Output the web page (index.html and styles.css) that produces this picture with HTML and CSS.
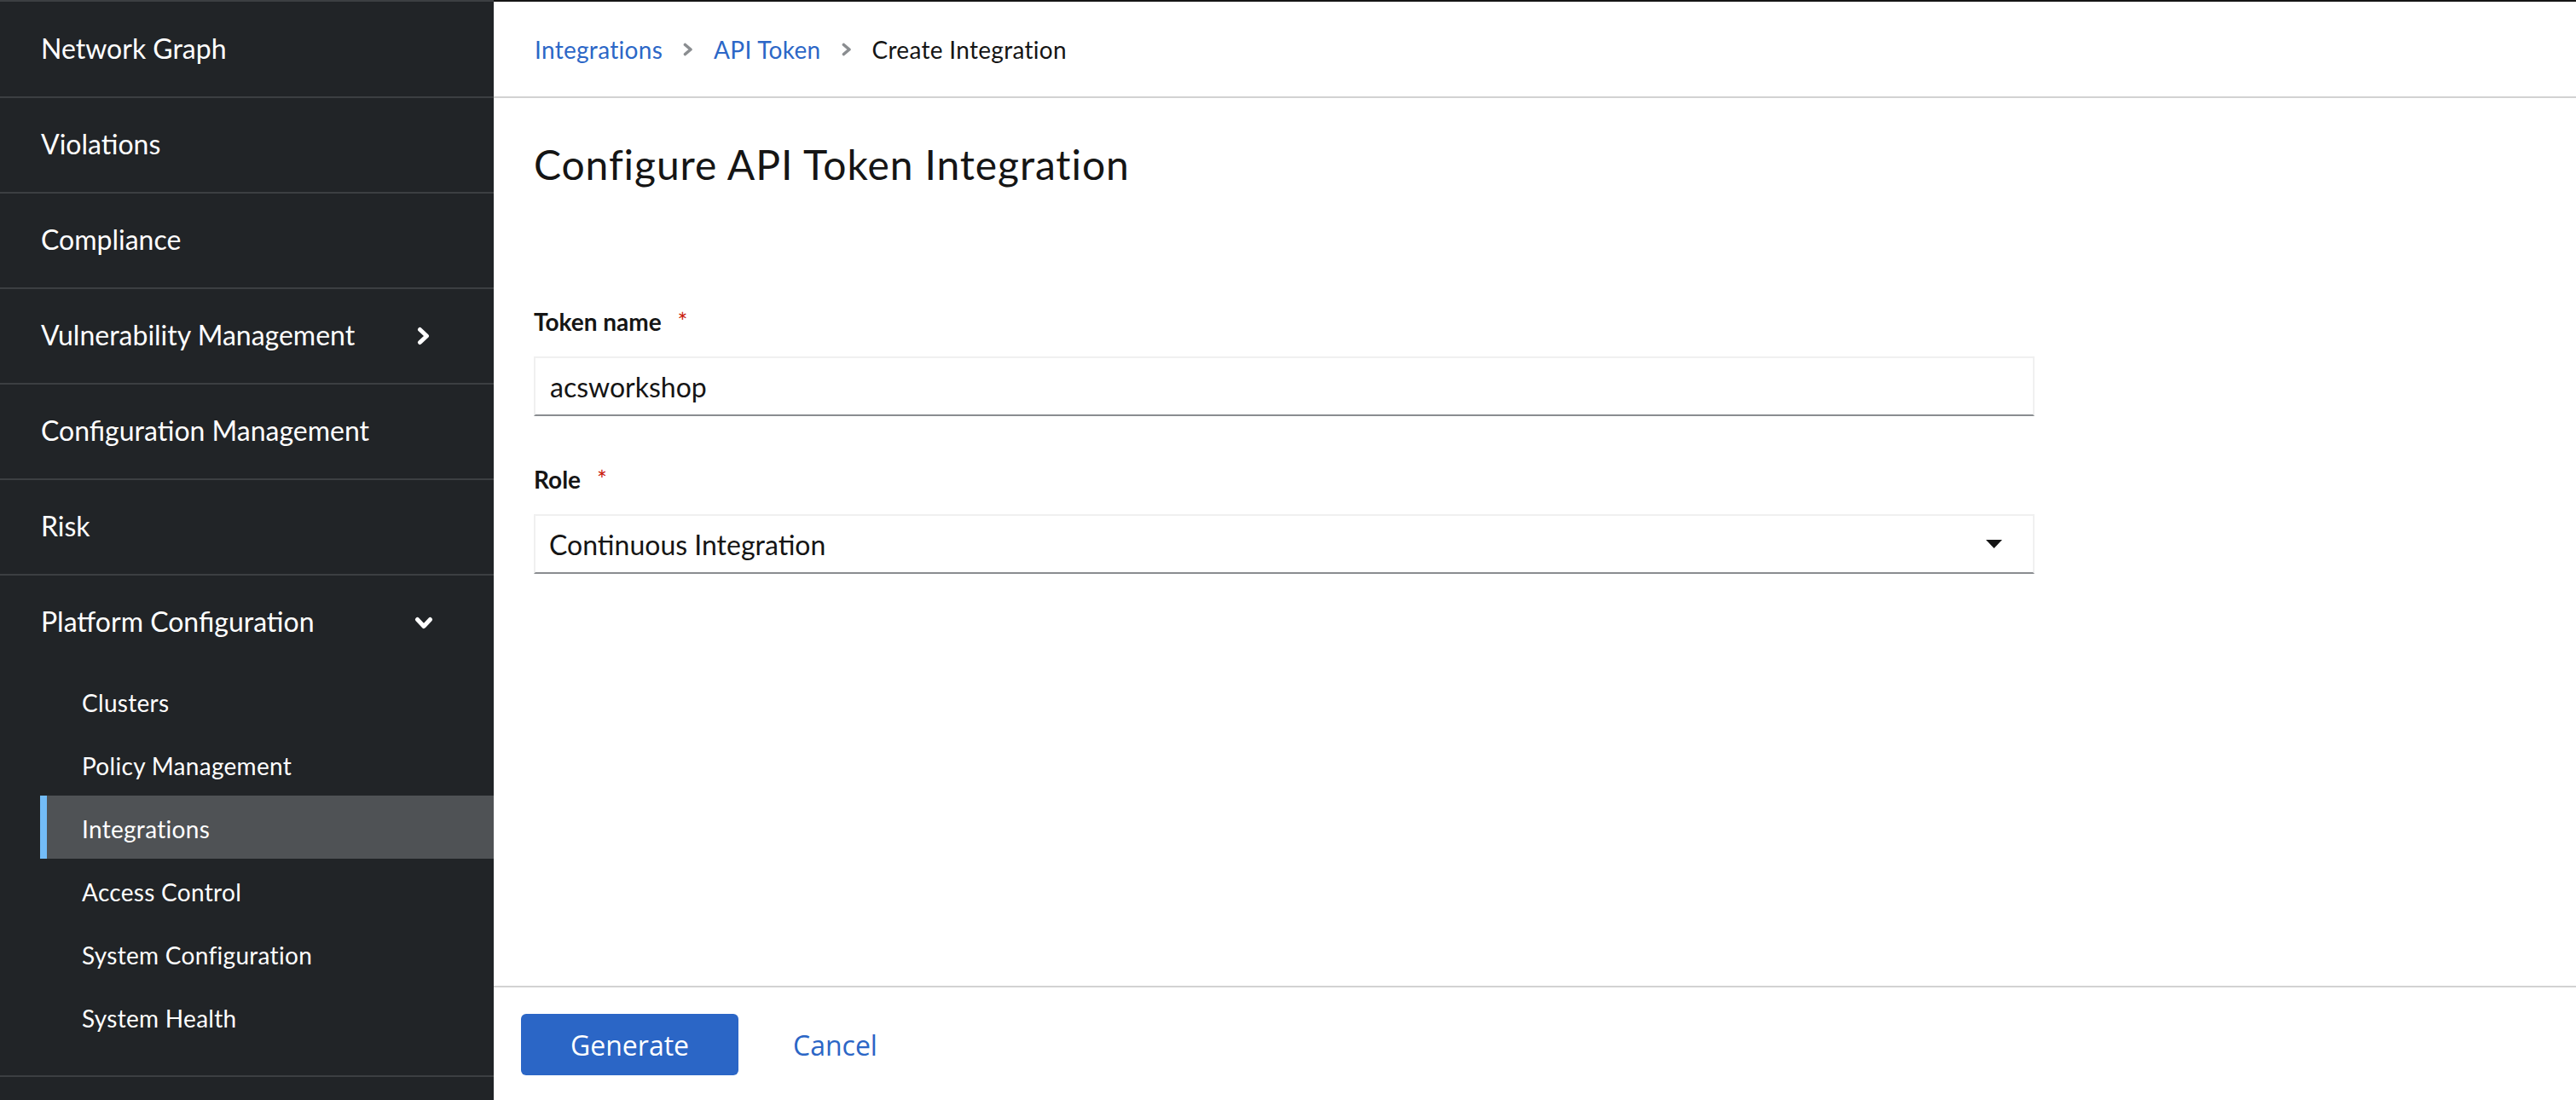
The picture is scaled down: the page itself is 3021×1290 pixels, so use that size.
FILE: index.html
```html
<!DOCTYPE html>
<html lang="en">
<head>
<meta charset="utf-8">
<title>Configure API Token Integration</title>
<link rel="stylesheet" href="styles.css">
</head>
<body>
<div class="page">
  <nav class="sidebar">
    <ul class="nav">
      <li class="nav-item"><a class="nav-link">Network Graph</a></li>
      <li class="nav-item"><a class="nav-link">Violations</a></li>
      <li class="nav-item"><a class="nav-link">Compliance</a></li>
      <li class="nav-item"><a class="nav-link">Vulnerability Management
        <svg class="chev-right" width="15" height="22" viewBox="0 0 15 22"><polyline points="3.5,3.5 11.5,11 3.5,18.5" fill="none" stroke="#fff" stroke-width="5" stroke-linecap="round" stroke-linejoin="round"/></svg></a></li>
      <li class="nav-item"><a class="nav-link">Configuration Management</a></li>
      <li class="nav-item"><a class="nav-link">Risk</a></li>
      <li class="nav-item expanded"><a class="nav-link">Platform Configuration
        <svg class="chev-down" width="22" height="15" viewBox="0 0 22 15"><polyline points="3.5,3.5 11,11.5 18.5,3.5" fill="none" stroke="#fff" stroke-width="5" stroke-linecap="round" stroke-linejoin="round"/></svg></a>
        <ul class="subnav">
          <li class="sub-item">Clusters</li>
          <li class="sub-item">Policy Management</li>
          <li class="sub-item current">Integrations</li>
          <li class="sub-item">Access Control</li>
          <li class="sub-item">System Configuration</li>
          <li class="sub-item">System Health</li>
        </ul>
      </li>
    </ul>
  </nav>
  <main class="main">
    <div class="crumbs">
      <a class="crumb-link">Integrations</a>
      <svg class="crumb-sep" width="12" height="16" viewBox="0 0 12 16"><polyline points="2.5,2.5 9,8 2.5,13.5" fill="none" stroke="#8a8d90" stroke-width="3.6" stroke-linecap="round" stroke-linejoin="round"/></svg>
      <a class="crumb-link">API Token</a>
      <svg class="crumb-sep" width="12" height="16" viewBox="0 0 12 16"><polyline points="2.5,2.5 9,8 2.5,13.5" fill="none" stroke="#8a8d90" stroke-width="3.6" stroke-linecap="round" stroke-linejoin="round"/></svg>
      <span class="crumb-current">Create Integration</span>
    </div>
    <div class="content">
      <h1 class="title">Configure API Token Integration</h1>
      <form class="form">
        <div class="field">
          <label class="label">Token name <span class="req">*</span></label>
          <div class="input">acsworkshop</div>
        </div>
        <div class="field">
          <label class="label">Role <span class="req">*</span></label>
          <div class="input select">
            <span>Continuous Integration</span>
            <svg class="caret" width="19" height="10" viewBox="0 0 19 10"><polygon points="0,0 19,0 9.5,10" fill="#151515"/></svg>
          </div>
        </div>
      </form>
    </div>
    <div class="footer">
      <button class="btn primary" type="button">Generate</button>
      <button class="btn link" type="button">Cancel</button>
    </div>
  </main>
</div>
</body>
</html>
```
FILE: styles.css
```css
* { box-sizing: border-box; }
html, body { margin: 0; padding: 0; }
body {
  font-family: Lato, "Liberation Sans", sans-serif;
  color: #151515;
  background: #fff;
}
.page {
  display: flex;
  height: 100vh;
  overflow: hidden;
}
.sidebar {
  width: 579px;
  flex: 0 0 579px;
  background: #212427;
  border-top: 2px solid #3c3f42;
  padding-top: 1px;
}
.nav, .subnav {
  list-style: none;
  margin: 0;
  padding: 0;
}
.nav-item {
  border-bottom: 2px solid #3c3f42;
}
.nav-link {
  display: flex;
  align-items: center;
  justify-content: space-between;
  height: 110px;
  padding: 0 75px 3px 48px;
  font-size: 32px;
  color: #fff;
}
.nav-link svg { margin-top: 3px; }
.expanded .nav-link { padding-right: 71px; }
.subnav {
  padding-bottom: 32px;
}
.sub-item {
  display: flex;
  align-items: center;
  height: 74px;
  margin-left: 47px;
  padding-left: 49px;
  padding-top: 3px;
  font-size: 28px;
  color: #fff;
  letter-spacing: 0.3px;
}
.sub-item.current {
  background: #4f5255;
  border-left: 8px solid #73bcf7;
  padding-left: 41px;
}
.main {
  flex: 1;
  display: flex;
  flex-direction: column;
  border-top: 2px solid #151515;
  min-width: 0;
}
.crumbs {
  display: flex;
  align-items: center;
  height: 113px;
  padding: 0 48px;
  border-bottom: 2px solid #d2d2d2;
  font-size: 28px;
  letter-spacing: 0.3px;
}
.crumb-link { color: #2c67c7; }
.crumb-sep { margin: 0 24px; }
.crumb-current { color: #151515; }
.content {
  flex: 1;
  padding: 49px 48px 0 47px;
}
.title {
  margin: 0 0 138px;
  font-size: 48px;
  line-height: 58px;
  font-weight: 400;
  letter-spacing: 0.9px;
  color: #151515;
}
.form {
  max-width: 1760px;
}
.field + .field { margin-top: 57px; }
.label {
  display: block;
  font-size: 28px;
  line-height: 34px;
  font-weight: 700;
  margin-bottom: 24px;
}
.req {
  color: #c9190b;
  font-weight: 400;
  margin-left: 12px;
}
.input {
  display: flex;
  align-items: center;
  justify-content: space-between;
  height: 70px;
  padding: 0 36px 0 17px;
  border: 2px solid #f0f0f0;
  border-bottom-color: #8a8d90;
  font-size: 32px;
  color: #151515;
  background: #fff;
}
.select { padding-left: 16px; }
.footer {
  display: flex;
  align-items: center;
  gap: 32px;
  padding: 31px 32px 29px;
  border-top: 2px solid #d2d2d2;
}
.btn {
  font-family: "Open Sans", "Liberation Sans", sans-serif;
  font-size: 32px;
  height: 72px;
  border: 0;
  border-radius: 6px;
  background: none;
  padding: 0 32px;
}
.btn.primary {
  width: 255px;
  background: #2b66c6;
  color: #fff;
}
.btn.link {
  color: #2b66c6;
}
```
